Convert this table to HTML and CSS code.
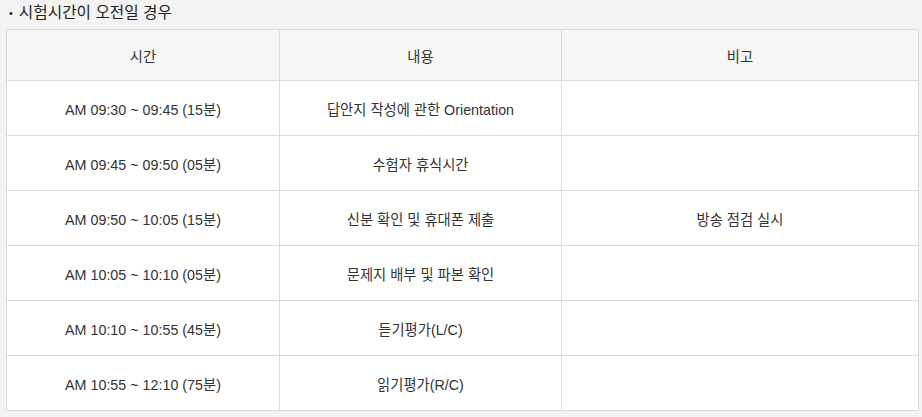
FILE: index.html
```html
<!DOCTYPE html>
<html lang="ko">
<head>
<meta charset="utf-8">
<link rel="stylesheet" href="styles.css">
</head>
<body>
<p class="title"><span class="bullet">•</span>시험시간이 오전일 경우</p>
<table class="schedule">
  <colgroup>
    <col class="c1">
    <col class="c2">
    <col class="c3">
  </colgroup>
  <thead>
    <tr><th>시간</th><th>내용</th><th>비고</th></tr>
  </thead>
  <tbody>
    <tr><td>AM 09:30 ~ 09:45 (15분)</td><td>답안지 작성에 관한 Orientation</td><td></td></tr>
    <tr><td>AM 09:45 ~ 09:50 (05분)</td><td>수험자 휴식시간</td><td></td></tr>
    <tr><td>AM 09:50 ~ 10:05 (15분)</td><td>신분 확인 및 휴대폰 제출</td><td>방송 점검 실시</td></tr>
    <tr><td>AM 10:05 ~ 10:10 (05분)</td><td>문제지 배부 및 파본 확인</td><td></td></tr>
    <tr><td>AM 10:10 ~ 10:55 (45분)</td><td>듣기평가(L/C)</td><td></td></tr>
    <tr><td>AM 10:55 ~ 12:10 (75분)</td><td>읽기평가(R/C)</td><td></td></tr>
  </tbody>
</table>
</body>
</html>
```

FILE: styles.css
```css
html, body {
  margin: 0;
  padding: 0;
  background: #f3f3f3;
}
body {
  font-family: "Liberation Sans", "Noto Sans CJK KR", Arial, sans-serif;
  color: #333;
  font-size: 14.3px;
}
.title {
  margin: 0;
  padding: 0 0 0 9px;
  height: 29px;
  line-height: 26px;
  font-size: 15.7px;
  color: #222;
}
.bullet {
  font-size: 11px;
  margin-right: 6px;
  vertical-align: 1px;
}
.schedule {
  margin-left: 6px;
  width: 912px;
  border-collapse: collapse;
  table-layout: fixed;
  background: #fff;
}
.c1 { width: 273px; }
.c2 { width: 282px; }
.c3 { width: 357px; }
.schedule th,
.schedule td {
  border: 1px solid #dcdcdc;
  padding: 0;
  text-align: center;
  vertical-align: middle;
  font-weight: normal;
  color: #333;
}
.schedule th {
  background: #f6f6f6;
  height: 50px;
}
.schedule td {
  height: 54px;
}
```
